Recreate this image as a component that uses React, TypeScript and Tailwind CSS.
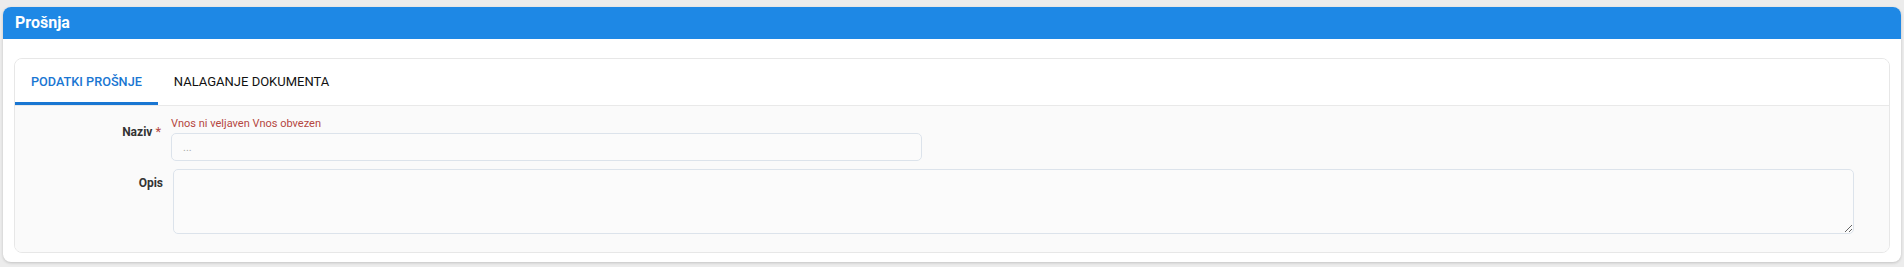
import React from "react";

export default function App() {
  return (
    <div
      className="h-[267px] bg-[#ececec] pt-[7px] px-[3px]"
      style={{ fontFamily: "Roboto, 'Liberation Sans', sans-serif" }}
    >
      <div className="bg-white rounded-[8px] shadow-[0_1px_3px_rgba(0,0,0,0.18)]">
        <div className="h-[32px] bg-[#1e88e5] rounded-t-[8px] px-[12px] flex items-center text-white font-bold text-[16px]">
          Prošnja
        </div>
        <div className="pt-[19px] px-[11px] pb-[9px]">
          <div className="border border-[#e7e7e7] rounded-[8px] overflow-hidden">
            <div className="flex h-[47px] bg-white border-b border-[#e9e9e9]">
              <div className="h-[46px] px-[16px] flex items-center text-[12.7px] font-medium text-[#1976d2] border-b-[3px] border-[#1976d2] pt-[3px]">
                PODATKI PROŠNJE
              </div>
              <div className="h-[46px] px-[16px] flex items-center text-[13px] font-normal text-[#111]">
                NALAGANJE DOKUMENTA
              </div>
            </div>
            <div className="bg-[#fafafa] pt-[11px] pb-[18px] flex flex-col">
              <div className="flex">
                <div className="w-[149px] text-right pr-[3px] pt-[7px] leading-[16px] text-[12px] font-bold text-[#333]">
                  Naziv <span className="text-[#b5473f] font-normal text-[13px]">*</span>
                </div>
                <div className="ml-[7px] flex flex-col">
                  <div className="h-[14px] leading-[14px] text-[11px] text-[#b5473f]">
                    Vnos ni veljaven Vnos obvezen
                  </div>
                  <input
                    className="mt-[2px] w-[751px] h-[28px] border border-[#dce3eb] rounded-[5px] bg-[#fbfbfb] px-[11px] text-[11px] outline-none placeholder:text-[#aaa]"
                    placeholder="..."
                  />
                </div>
              </div>
              <div className="flex mt-[8px]">
                <div className="w-[149px] text-right pr-[1px] pt-[6px] leading-[16px] text-[12px] font-bold text-[#333]">
                  Opis
                </div>
                <textarea className="ml-[9px] w-[1681px] h-[65px] border border-[#dce3eb] rounded-[5px] bg-[#fbfbfb] outline-none block" />
              </div>
            </div>
          </div>
        </div>
      </div>
    </div>
  );
}
